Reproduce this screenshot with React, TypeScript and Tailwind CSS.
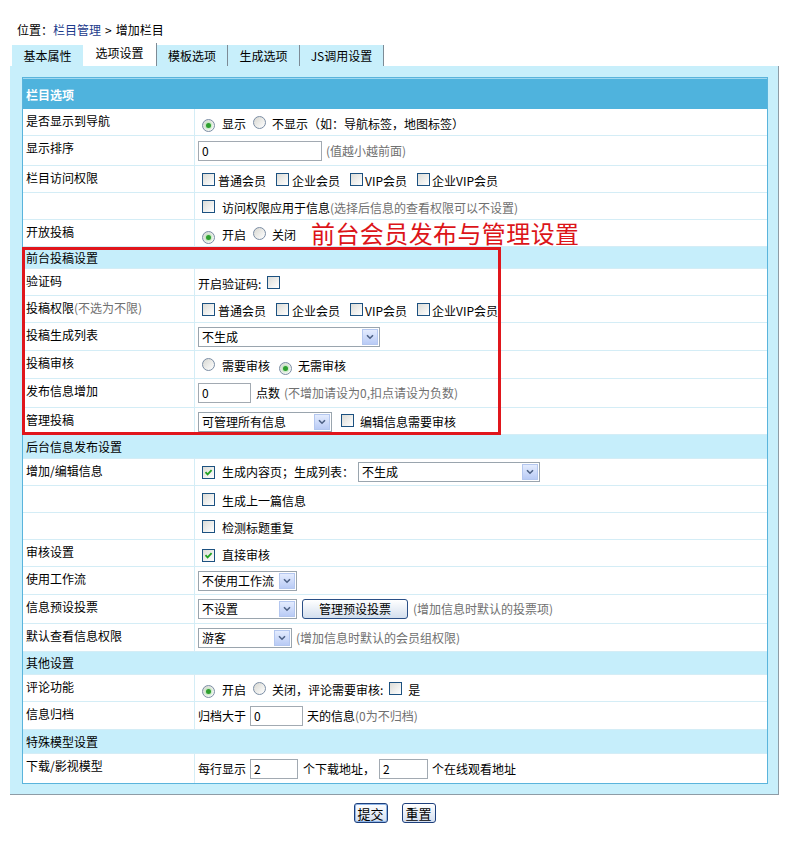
import type { ReactNode } from 'react';

// XP-era admin form: "增加栏目 / 选项设置"

function Radio({ on }: { on?: boolean }) {
  return (
    <span className="inline-flex h-[13px] w-[13px] shrink-0 items-center justify-center rounded-full border border-[#7b8da4] bg-linear-to-br from-[#d8d8d2] to-white">
      {on && <span className="h-[5px] w-[5px] rounded-full bg-[#2f9f2f] shadow-[0_0_2px_1px_#b5e6b5]" />}
    </span>
  );
}

function Check({ on }: { on?: boolean }) {
  return (
    <span className="inline-flex h-[13px] w-[13px] shrink-0 items-center justify-center border border-[#1c5180] bg-linear-to-br from-[#dcdcd7] to-white">
      {on && (
        <svg width="9" height="9" viewBox="0 0 9 9">
          <path d="M1.5 4.2 L3.6 6.4 L7.6 2.2" fill="none" stroke="#21a121" strokeWidth="1.8" />
        </svg>
      )}
    </span>
  );
}

function Input({ v, className }: { v: string; className: string }) {
  return (
    <span className={`flex h-[20px] shrink-0 items-center border border-[#a2aab2] bg-white pl-[3px] ${className}`}>
      {v}
    </span>
  );
}

function Select({ v, className }: { v: string; className: string }) {
  return (
    <span className={`flex h-[20px] shrink-0 items-center border border-[#9aa5ae] bg-white ${className}`}>
      <span className="flex-1 pl-[3px]">{v}</span>
      <span className="mr-px flex h-[16px] w-[16px] items-center justify-center border border-[#b4c7ef] bg-linear-to-b from-[#e4ecfe] to-[#b9cbf5]">
        <svg width="8" height="6" viewBox="0 0 8 6">
          <path d="M1 1.2 L4 4.2 L7 1.2" fill="none" stroke="#4d6185" strokeWidth="1.6" />
        </svg>
      </span>
    </span>
  );
}

function Row({
  label,
  children,
  h,
  c = 'pt-[3px]',
  last,
}: {
  label?: ReactNode;
  children: ReactNode;
  h: string;
  c?: string;
  last?: boolean;
}) {
  return (
    <div className={`flex ${h} ${last ? '' : 'border-b border-[#d4edf6]'}`}>
      <div className="w-[172px] shrink-0 border-r border-[#d4edf6] pl-[3px] pt-[4px]">{label}</div>
      <div className={`flex flex-1 items-center pl-[3px] whitespace-nowrap ${c}`}>{children}</div>
    </div>
  );
}

function Section({ title, h }: { title: string; h: string }) {
  return (
    <div className={`flex ${h} items-center border-b border-[#d4edf6] bg-[#c6eefb] pl-[3px]`}>{title}</div>
  );
}

const Gray = ({ children }: { children: ReactNode }) => <span className="text-[#707070]">{children}</span>;

function Members() {
  return (
    <>
      <span className="ml-[4px]"><Check /></span>
      <span className="ml-[3px]">普通会员</span>
      <span className="ml-[10px]"><Check /></span>
      <span className="ml-[3px]">企业会员</span>
      <span className="ml-[10px]"><Check /></span>
      <span className="ml-[2px]">VIP会员</span>
      <span className="ml-[10px]"><Check /></span>
      <span className="ml-[2px]">企业VIP会员</span>
    </>
  );
}

export default function App() {
  return (
    <div className="min-h-screen bg-white pt-[22px] font-['Noto_Sans_CJK_SC',sans-serif] text-[12px] leading-[16px] text-black">
      <div className="pl-[17px]">
        位置：<span className="text-[#1c3b8c]">栏目管理</span>
        <span className="mx-[4px]">&gt;</span>增加栏目
      </div>

      {/* tabs */}
      <div className="ml-[12px] mt-[5px] flex items-end">
        <div className="flex h-[21px] w-[71px] items-center justify-center bg-[#c8effb]">基本属性</div>
        <div className="flex h-[23px] w-[74px] items-center justify-center border-r border-[#7d8b96] bg-white pb-[3px]">选项设置</div>
        <div className="flex h-[21px] w-[71px] items-center justify-center border-r border-[#7d8b96] bg-[#c8effb]">模板选项</div>
        <div className="flex h-[21px] w-[72px] items-center justify-center border-r border-[#7d8b96] bg-[#c8effb]">生成选项</div>
        <div className="flex h-[21px] w-[84px] items-center justify-center border-r border-[#7d8b96] bg-[#c8effb]">JS调用设置</div>
      </div>

      <div className="ml-[10px] w-[769px] border-r border-b border-[#8e9ca6] bg-[#c8effb] pt-[11px] pr-[10px] pb-[10px] pl-[12px]">
        <div className="border border-[#5ab4dc] bg-white">
          <div className="flex h-[31px] items-center border-t border-[#9fd8f0] bg-[#4fb3dd] pl-[3px] pt-[2px] font-bold text-white">
            栏目选项
          </div>

          <Row label="是否显示到导航" h="h-[27px]">
            <span className="ml-[4px]"><Radio on /></span>
            <span className="ml-[7px]">显示</span>
            <span className="ml-[7px]"><Radio /></span>
            <span className="ml-[6px]">不显示（如：导航标签，地图标签）</span>
          </Row>
          <Row label="显示排序" h="h-[30px]" c="pt-0">
            <Input v="0" className="w-[124px]" />
            <span className="ml-[4px]"><Gray>(值越小越前面)</Gray></span>
          </Row>
          <Row label="栏目访问权限" h="h-[27px]">
            <Members />
          </Row>
          <Row h="h-[27px]">
            <span className="ml-[4px]"><Check /></span>
            <span className="ml-[7px]">访问权限应用于信息</span>
            <Gray>(选择后信息的查看权限可以不设置)</Gray>
          </Row>
          <Row label="开放投稿" h="h-[27px]" c="pt-0">
            <span className="ml-[4px] mt-[4px]"><Radio on /></span>
            <span className="ml-[7px] mt-[4px]">开启</span>
            <span className="ml-[7px] mt-[4px]"><Radio /></span>
            <span className="ml-[6px] mt-[4px]">关闭</span>
            <span className="ml-[15px] text-[24px] leading-none tracking-[0.4px] text-[#dc1419]">
              前台会员发布与管理设置
            </span>
          </Row>

          {/* framed group */}
          <div className="relative">
            <Section title="前台投稿设置" h="h-[22px]" />
            <Row label="验证码" h="h-[27px]">
              <span>开启验证码:</span>
              <span className="ml-[6px]"><Check /></span>
            </Row>
            <Row
              label={
                <>
                  投稿权限<Gray>(不选为不限)</Gray>
                </>
              }
              h="h-[27px]"
            >
              <Members />
            </Row>
            <Row label="投稿生成列表" h="h-[28px]" c="pt-0">
              <Select v="不生成" className="w-[182px]" />
            </Row>
            <Row label="投稿审核" h="h-[28px]">
              <span className="ml-[4px]"><Radio /></span>
              <span className="ml-[7px]">需要审核</span>
              <span className="ml-[9px]"><Radio on /></span>
              <span className="ml-[6px]">无需审核</span>
            </Row>
            <Row label="发布信息增加" h="h-[29px]" c="pt-0">
              <Input v="0" className="w-[53px]" />
              <span className="ml-[5px]">点数</span>
              <span className="ml-[4px]"><Gray>(不增加请设为0,扣点请设为负数)</Gray></span>
            </Row>
            <Row label="管理投稿" h="h-[27px]" c="pt-[2px]">
              <Select v="可管理所有信息" className="w-[134px]" />
              <span className="ml-[9px]"><Check /></span>
              <span className="ml-[6px]">编辑信息需要审核</span>
            </Row>
            <div className="pointer-events-none absolute top-0 bottom-0 -left-px w-[479px] border-[3px] border-[#e0161c]" />
          </div>

          <Section title="后台信息发布设置" h="h-[24px]" />
          <Row label="增加/编辑信息" h="h-[27px]" c="pt-0">
            <span className="ml-[4px]"><Check on /></span>
            <span className="ml-[7px]">生成内容页；生成列表：</span>
            <span className="ml-[4px]"><Select v="不生成" className="w-[182px]" /></span>
          </Row>
          <Row h="h-[27px]">
            <span className="ml-[4px]"><Check /></span>
            <span className="ml-[7px]">生成上一篇信息</span>
          </Row>
          <Row h="h-[27px]">
            <span className="ml-[4px]"><Check /></span>
            <span className="ml-[7px]">检测标题重复</span>
          </Row>
          <Row label="审核设置" h="h-[27px]">
            <span className="ml-[4px]"><Check on /></span>
            <span className="ml-[7px]">直接审核</span>
          </Row>
          <Row label="使用工作流" h="h-[28px]" c="pt-0">
            <Select v="不使用工作流" className="w-[99px]" />
          </Row>
          <Row label="信息预设投票" h="h-[29px]" c="pt-0">
            <Select v="不设置" className="w-[99px]" />
            <span className="ml-[5px] flex h-[20px] w-[106px] items-center justify-center rounded-[3px] border border-[#2a4f86] bg-linear-to-b from-white to-[#d3dfee]">
              管理预设投票
            </span>
            <span className="ml-[5px]"><Gray>(增加信息时默认的投票项)</Gray></span>
          </Row>
          <Row label="默认查看信息权限" h="h-[28px]" c="pt-0">
            <Select v="游客" className="w-[94px]" />
            <span className="ml-[4px]"><Gray>(增加信息时默认的会员组权限)</Gray></span>
          </Row>

          <Section title="其他设置" h="h-[23px]" />
          <Row label="评论功能" h="h-[27px]">
            <span className="ml-[4px]"><Radio on /></span>
            <span className="ml-[7px]">开启</span>
            <span className="ml-[7px]"><Radio /></span>
            <span className="ml-[6px]">关闭，评论需要审核:</span>
            <span className="ml-[6px]"><Check /></span>
            <span className="ml-[6px]">是</span>
          </Row>
          <Row label="信息归档" h="h-[28px]" c="pt-0">
            <span>归档大于</span>
            <span className="ml-[4px]"><Input v="0" className="w-[53px]" /></span>
            <span className="ml-[4px]">天的信息</span>
            <Gray>(0为不归档)</Gray>
          </Row>

          <Section title="特殊模型设置" h="h-[24px]" />
          <Row label="下载/影视模型" h="h-[29px]" c="pt-0" last>
            <span>每行显示</span>
            <span className="ml-[4px]"><Input v="2" className="w-[48px]" /></span>
            <span className="ml-[5px]">个下载地址，</span>
            <span className="ml-[4px]"><Input v="2" className="w-[49px]" /></span>
            <span className="ml-[4px]">个在线观看地址</span>
          </Row>
        </div>
      </div>

      <div className="mt-[8px] flex justify-center gap-[14px]">
        <button className="flex h-[20px] w-[34px] items-center justify-center rounded-[3px] border border-[#1d3f7c] bg-linear-to-b from-white to-[#d4dff0] text-[13px] leading-none shadow-[inset_0_0_0_1px_#8fb6e8]">
          提交
        </button>
        <button className="flex h-[20px] w-[34px] items-center justify-center rounded-[3px] border border-[#1d3f7c] bg-linear-to-b from-white to-[#d4dff0] text-[13px] leading-none">
          重置
        </button>
      </div>
    </div>
  );
}
